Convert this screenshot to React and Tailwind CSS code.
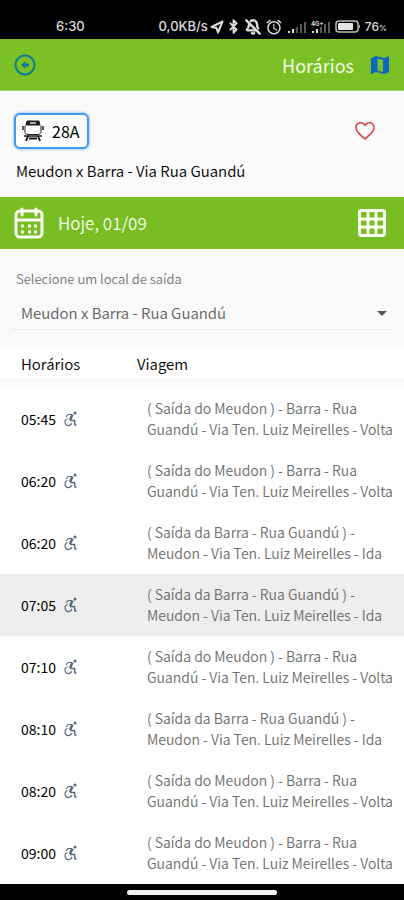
import React, { useState } from 'react';
import { MdAlarm } from 'react-icons/md';
import { IoMdHeartEmpty } from 'react-icons/io';
import { BellOff, Bluetooth } from 'lucide-react';

// --- MOCK DATA ---
const VOLTA = '( Saída do Meudon ) - Barra - Rua Guandú - Via Ten. Luiz Meirelles - Volta';
const IDA = '( Saída da Barra - Rua Guandú ) - Meudon - Via Ten. Luiz Meirelles - Ida';

const TRIPS = [
  { id: 1, time: '05:45', trip: VOLTA },
  { id: 2, time: '06:20', trip: VOLTA },
  { id: 3, time: '06:20', trip: IDA },
  { id: 4, time: '07:05', trip: IDA },
  { id: 5, time: '07:10', trip: VOLTA },
  { id: 6, time: '08:10', trip: IDA },
  { id: 7, time: '08:20', trip: VOLTA },
  { id: 8, time: '09:00', trip: VOLTA },
];

const NEXT_TRIP_ID = 4;

export default function App() {
  const [place, setPlace] = useState('meudon');

  return (
    <div className="min-h-screen flex flex-col bg-white text-black font-['Noto_Sans_CJK_SC','Noto_Sans',sans-serif]">
      <StatusBar />

      {/* HEADER */}
      <header className="h-[52px] px-[14px] flex items-center justify-between bg-[#7bc125] border-b border-[#a8d66f]">
        <button type="button" aria-label="Voltar" className="text-[#0b7a92]">
          <BackIcon />
        </button>
        <div className="flex items-center gap-4">
          <h1 className="text-lg text-[#f4fbe9]">Horários</h1>
          <button type="button" aria-label="Mapa" className="text-[#0b67c2]">
            <MapIcon />
          </button>
        </div>
      </header>

      {/* LINE INFO */}
      <section className="h-[106px] pt-[22px] px-[14px] bg-[#fafafa]">
        <div className="flex items-center justify-between">
          <span className="h-[36px] w-[75px] flex items-center gap-2 px-[6px] bg-white border-2 border-[#3f97f6] rounded-md shadow-[0_0_3px_#5aa9ff]">
            <BusIcon />
            <span className="text-base">28A</span>
          </span>
          <button type="button" aria-label="Favoritar" className="text-[#e03a3a] mr-[13px]">
            <IoMdHeartEmpty size={24} />
          </button>
        </div>
        <h2 className="mt-[10px] ml-[2px] text-[15px] leading-6 font-[350]">Meudon x Barra - Via Rua Guandú</h2>
      </section>

      {/* DATE BAR */}
      <div className="h-[52px] px-[14px] flex items-center justify-between bg-[#78be22] text-[#f9fdf2]">
        <button type="button" className="flex items-center gap-[14px]">
          <CalendarIcon />
          <span className="text-[17px] font-[350]">Hoje, 01/09</span>
        </button>
        <button type="button" aria-label="Grade" className="mr-1">
          <GridIcon />
        </button>
      </div>

      {/* DEPARTURE SELECT */}
      <div className="h-[98px] pt-5 px-3 bg-[#fafafa]">
        <label htmlFor="place" className="block ml-1 text-[13px] leading-5 font-[350] text-[#757575]">Selecione um local de saída</label>
        <div className="relative mt-2 h-[33px] border-b border-[#ececec]">
          <select
            id="place"
            value={place}
            onChange={(e) => setPlace(e.target.value)}
            className="w-full h-8 pl-[9px] text-[15px] font-[350] text-[#606060] bg-transparent appearance-none outline-none"
          >
            <option value="meudon">Meudon x Barra - Rua Guandú</option>
            <option value="barra">Barra - Rua Guandú x Meudon</option>
          </select>
          <svg className="absolute right-[5px] top-[14px] pointer-events-none" width="10" height="5" viewBox="0 0 10 5">
            <path d="M0 0h10L5 5z" fill="#555" />
          </svg>
        </div>
      </div>

      {/* TIMETABLE */}
      <table className="w-full table-fixed border-separate border-spacing-0">
        <thead>
          <tr className="h-[41px] text-[15px] leading-5 text-left align-top">
            <th className="w-[137px] pt-[7px] pl-[21px] font-[350] border-b-[10px] border-[#fafafa]">Horários</th>
            <th className="pt-[7px] font-[350] border-b-[10px] border-[#fafafa]">Viagem</th>
          </tr>
        </thead>
        <tbody>
          {TRIPS.map((t) => (
            <TripRow key={t.id} trip={t} active={t.id === NEXT_TRIP_ID} />
          ))}
        </tbody>
      </table>

      {/* GESTURE BAR */}
      <div className="h-4 flex items-center justify-center bg-black">
        <div className="w-[150px] h-[5px] rounded-full bg-[#f0f0f0]"></div>
      </div>
    </div>
  );
}

// --- SUB COMPONENTS ---

function TripRow({ trip, active }) {
  return (
    <tr className={`h-[62px] ${active ? 'bg-[#eeeeee]' : 'bg-white'}`}>
      <td className="pl-[21px]">
        <div className="flex items-center gap-[7px]">
          <span className="text-sm">{trip.time}</span>
          <WheelchairIcon />
        </div>
      </td>
      <td className="pl-[10px] pr-2 text-sm leading-[21px] font-[350] text-[#6c6c6c]">{trip.trip}</td>
    </tr>
  );
}

function StatusBar() {
  return (
    <div className="h-[39px] pt-[14px] pl-[56px] pr-[17px] flex items-center justify-between bg-black text-[#dedede] font-['Inter',sans-serif] text-[13px] font-medium">
      <span>6:30</span>
      <div className="flex items-center gap-1">
        <div className="flex items-center gap-[2px]">
          <span>0,0KB/s</span>
          <svg width="14" height="14" viewBox="0 0 14 14" fill="none" stroke="currentColor" strokeWidth="2" strokeLinejoin="round">
            <path d="M1.500 7L12.500 1.500 8 12.500 6.500 8z" />
          </svg>
          <Bluetooth size={15} strokeWidth={3} />
        </div>
        <BellOff size={16} strokeWidth={3.500} />
        <MdAlarm size={18} />
        <SignalIcon />
        <SignalIcon label="4G+" />
        <BatteryIcon />
        <span className="text-xs">76<span className="text-[8px]">%</span></span>
      </div>
    </div>
  );
}

function SignalIcon({ label }) {
  return (
    <svg width="20" height="14" viewBox="0 0 20 14" fill="currentColor">
      <path d="M1 11h2v2H1zM5 9h2v4H5z" />
      <path d="M9 7h2v6H9zM13 4h2v9h-2zM17 2h2v11h-2z" opacity="0.4" />
      {label && <text x="0" y="6" fontSize="6" fontWeight="700">{label}</text>}
    </svg>
  );
}

function BatteryIcon() {
  return (
    <svg width="26" height="13" viewBox="0 0 26 13">
      <rect x="1" y="1" width="22" height="11" rx="3" fill="none" stroke="#bdbdbd" strokeWidth="1.500" />
      <rect x="3" y="3" width="15" height="7" rx="1" fill="#e4e4e4" />
      <path d="M24 4.500q2 2 0 4z" fill="#d0d0d0" />
    </svg>
  );
}

function BackIcon() {
  return (
    <svg width="22" height="22" viewBox="0 0 22 22">
      <circle cx="11" cy="11" r="9.500" fill="none" stroke="currentColor" strokeWidth="2" />
      <path d="M7 11l4.500-4v2.500H15v3h-3.500V15z" fill="currentColor" />
    </svg>
  );
}

function MapIcon() {
  return (
    <svg width="20" height="20" viewBox="0 0 20 20" fill="currentColor">
      <path d="M1 3l5-2 8 2 5-2v16l-5 2-8-2-5 2zM7.500 3.500v12l5.500 1.500V5z" fillRule="evenodd" />
    </svg>
  );
}

function BusIcon() {
  return (
    <svg width="22" height="22" viewBox="0 0 22 22" fill="none" stroke="#1c1c1c">
      <path d="M4 5l1-4h12l1 4z" fill="#1c1c1c" />
      <path d="M8 3h6" stroke="#aaa" strokeWidth="2" />
      <path d="M3 5.500v7q1 2 3 2h10q2 0 3-2v-7" />
      <path d="M1 6v4M21 6v4" strokeWidth="1.500" />
      <path d="M2 16h18" strokeWidth="1.500" />
      <path d="M6 16l-2 5M16 16l2 5M7 18.500h8" strokeWidth="2" />
    </svg>
  );
}

function WheelchairIcon() {
  return (
    <svg width="15" height="16" viewBox="0 0 15 16" fill="none" stroke="#54677c" strokeLinejoin="round">
      <circle cx="12" cy="2" r="1.500" fill="#54677c" stroke="none" />
      <path d="M3 6l2-2.500h4" strokeWidth="1.200" />
      <path d="M9.500 3.500L7 9" strokeWidth="2.500" />
      <path d="M7 9.500h4.500l.5 4.500h1.500" strokeWidth="1.500" />
      <path d="M4.500 7.500a3.600 3.600 0 1 0 4.500 4.500" strokeWidth="1.200" />
    </svg>
  );
}

function GridIcon() {
  return (
    <svg width="28" height="28" viewBox="0 0 28 28" fill="none" stroke="currentColor" strokeWidth="3">
      <rect x="1.500" y="1.500" width="25" height="25" rx="2" />
      <path d="M10 2v24M18 2v24M2 10h24M2 18h24" />
    </svg>
  );
}

function CalendarIcon() {
  return (
    <svg width="30" height="32" viewBox="0 0 30 32" fill="none" stroke="currentColor">
      <rect x="2" y="4" width="26" height="26" rx="4" strokeWidth="3" />
      <path d="M2 13h26" strokeWidth="3" />
      <path d="M8 2v6M22 2v6" strokeWidth="3" strokeLinecap="round" />
      <path d="M7 19h3M14 19h3M20 19h3M7 25h3M14 25h3M20 25h3" strokeWidth="3" />
    </svg>
  );
}
